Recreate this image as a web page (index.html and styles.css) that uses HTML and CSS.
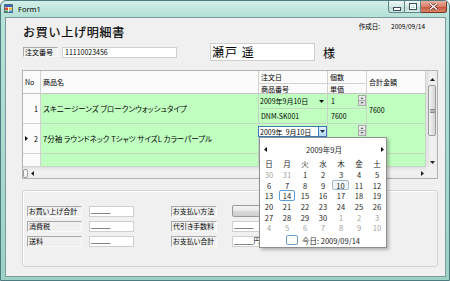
FILE: index.html
```html
<!DOCTYPE html>
<html lang="ja">
<head>
    <meta charset="UTF-8">
    <title>Form1</title>
    <link rel="stylesheet" href="styles.css">
</head>
<body>
    <div class="window">
        <div class="titlebar">
            <div class="caption">
                <svg class="app-icon" viewBox="0 0 9 9">
                    <rect x="0.5" y="0.5" width="8" height="8" fill="#fff" stroke="#56708f"/>
                    <rect x="1" y="1" width="7" height="2" fill="#3a63b8"/>
                    <rect x="1" y="3.5" width="3" height="2.5" fill="#e0452c"/>
                    <rect x="5" y="3.5" width="3" height="2.5" fill="#f2c230"/>
                    <rect x="1" y="6.5" width="3" height="1.5" fill="#3fa344"/>
                    <rect x="5" y="6.5" width="3" height="1.5" fill="#3a8fd8"/>
                </svg>
                <span class="caption-text">Form1</span>
            </div>
            <div class="caption-buttons">
                <span class="cbtn cbtn-min">
                    <svg width="8" height="4" viewBox="0 0 8 4"><rect x="0.5" y="0.5" width="7" height="3" fill="#fff" stroke="#3b4f55"/></svg>
                </span>
                <span class="cbtn cbtn-max">
                    <svg width="8" height="7" viewBox="0 0 8 7"><rect x="0.5" y="0.5" width="7" height="6" fill="none" stroke="#3b4f55"/><rect x="1.5" y="2" width="5" height="3.5" fill="none" stroke="#fff"/></svg>
                </span>
                <span class="cbtn cbtn-close">
                    <svg width="9" height="7" viewBox="0 0 9 7"><path d="M1 0.5 L8 6.5 M8 0.5 L1 6.5" stroke="#5a1b10" stroke-width="2.6"/><path d="M1 0.5 L8 6.5 M8 0.5 L1 6.5" stroke="#fff" stroke-width="1.4"/></svg>
                </span>
            </div>
        </div>

        <div class="client">
            <div class="top-row">
                <h1 class="doc-title">お買い上げ明細書</h1>
                <div class="created"><span>作成日:</span><span>2009/09/14</span></div>
            </div>

            <div class="order-row">
                <span class="label order-label">注文番号</span>
                <span class="textbox order-no">11110023456</span>
                <span class="textbox name-box">瀬戸 遥</span>
                <span class="honorific">様</span>
            </div>

            <div class="grid">
                <div class="cells">
                    <!-- header -->
                    <div class="cell hd span2">No</div>
                    <div class="cell hd span2">商品名</div>
                    <div class="cell hd">注文日</div>
                    <div class="cell hd">個数</div>
                    <div class="cell hd span2">合計金額</div>
                    <div class="cell hd hd-last">商品番号</div>
                    <div class="cell hd hd-last">単価</div>

                    <!-- row 1 -->
                    <div class="cell rh span2"><span></span><span>1</span></div>
                    <div class="cell gr span2 name-cell">スキニージーンズ ブロークンウォッシュタイプ</div>
                    <div class="cell gr date-cell">
                        <span>2009年9月10日</span>
                        <svg width="5" height="3" viewBox="0 0 5 3"><path d="M0 0 H5 L2.5 3 Z" fill="#111"/></svg>
                    </div>
                    <div class="cell gr qty-cell">
                        <span>1</span>
                        <svg class="spin" viewBox="0 0 8 11"><rect x="0.5" y="0.5" width="7" height="5" fill="#ececec" stroke="#a9a9a9"/><rect x="0.5" y="5.5" width="7" height="5" fill="#e2e2e2" stroke="#a9a9a9"/><path d="M2.5 4 H5.5 L4 2.3 Z M2.5 7 H5.5 L4 8.7 Z" fill="#555"/></svg>
                    </div>
                    <div class="cell gr span2 total-cell">7600</div>
                    <div class="cell gr sub">DNM-SK001</div>
                    <div class="cell gr sub qty-cell">7600</div>

                    <!-- row 2 -->
                    <div class="cell rh span2">
                        <svg width="3" height="5" viewBox="0 0 3 5"><path d="M0 0 L3 2.5 L0 5 Z" fill="#111"/></svg>
                        <span>2</span>
                    </div>
                    <div class="cell gr span2 name-cell">7分袖 ラウンドネック Tシャツ サイズL カラーパープル</div>
                    <div class="cell gr date-edit-cell">
                        <div class="date-edit">
                            <span>2009年&nbsp;&nbsp;9月10日</span>
                            <span class="drop-btn"><svg width="5" height="3" viewBox="0 0 5 3"><path d="M0 0 H5 L2.5 3 Z" fill="#1c2f45"/></svg></span>
                        </div>
                    </div>
                    <div class="cell gr qty-cell">
                        <span></span>
                        <svg class="spin" viewBox="0 0 8 11"><rect x="0.5" y="0.5" width="7" height="5" fill="#ececec" stroke="#a9a9a9"/><rect x="0.5" y="5.5" width="7" height="5" fill="#e2e2e2" stroke="#a9a9a9"/><path d="M2.5 4 H5.5 L4 2.3 Z M2.5 7 H5.5 L4 8.7 Z" fill="#555"/></svg>
                    </div>
                    <div class="cell gr span2"></div>
                    <div class="cell gr sub"></div>
                    <div class="cell gr sub"></div>

                    <!-- new row -->
                    <div class="cell rh"></div>
                    <div class="cell gr"></div>
                    <div class="cell gr"></div>
                    <div class="cell gr"></div>
                    <div class="cell gr"></div>
                </div>

                <div class="vscroll">
                    <span class="sb-btn sb-up"><svg width="5" height="3" viewBox="0 0 5 3"><path d="M0 3 H5 L2.5 0 Z" fill="#222"/></svg></span>
                    <span class="vthumb"><svg width="5" height="4" viewBox="0 0 5 4"><path d="M0 0.5 H5 M0 2 H5 M0 3.5 H5" stroke="#777" stroke-width="0.8"/></svg></span>
                    <span class="sb-fill"></span>
                    <span class="sb-btn sb-down"><svg width="5" height="3" viewBox="0 0 5 3"><path d="M0 0 H5 L2.5 3 Z" fill="#222"/></svg></span>
                </div>
                <div class="hscroll">
                    <span class="hthumb"></span>
                    <svg class="h-left" width="3" height="5" viewBox="0 0 3 5"><path d="M3 0 L0 2.5 L3 5 Z" fill="#222"/></svg>
                    <span class="sb-fill"></span>
                    <svg class="h-right" width="3" height="5" viewBox="0 0 3 5"><path d="M0 0 L3 2.5 L0 5 Z" fill="#222"/></svg>
                </div>
                <div class="corner"></div>
            </div>

            <div class="summary">
                <span class="label sum-label">お買い上げ合計</span>
                <span class="textbox sum-box">_____</span>
                <span class="label sum-label right">お支払い方法</span>
                <span class="combo"></span>

                <span class="label sum-label">消費税</span>
                <span class="textbox sum-box">_____</span>
                <span class="label sum-label right">代引き手数料</span>
                <span class="textbox sum-box">_____</span>

                <span class="label sum-label">送料</span>
                <span class="textbox sum-box">_____</span>
                <span class="label sum-label right">お支払い合計</span>
                <span class="textbox sum-box">_____<span class="yen">円</span></span>
            </div>

            <div class="calendar">
                <div class="cal-head">
                    <svg width="3" height="5" viewBox="0 0 3 5"><path d="M3 0 L0 2.5 L3 5 Z" fill="#111"/></svg>
                    <span>2009年9月</span>
                    <svg width="3" height="5" viewBox="0 0 3 5"><path d="M0 0 L3 2.5 L0 5 Z" fill="#111"/></svg>
                </div>
                <div class="cal-grid">
                    <span class="dow">日</span><span class="dow">月</span><span class="dow">火</span><span class="dow">水</span><span class="dow">木</span><span class="dow">金</span><span class="dow">土</span>
                    <span class="day other">30</span><span class="day other">31</span><span class="day">1</span><span class="day">2</span><span class="day">3</span><span class="day">4</span><span class="day">5</span>
                    <span class="day">6</span><span class="day">7</span><span class="day">8</span><span class="day">9</span><span class="day selected">10</span><span class="day">11</span><span class="day">12</span>
                    <span class="day">13</span><span class="day today">14</span><span class="day">15</span><span class="day">16</span><span class="day">17</span><span class="day">18</span><span class="day">19</span>
                    <span class="day">20</span><span class="day">21</span><span class="day">22</span><span class="day">23</span><span class="day">24</span><span class="day">25</span><span class="day">26</span>
                    <span class="day">27</span><span class="day">28</span><span class="day">29</span><span class="day">30</span><span class="day other">1</span><span class="day other">2</span><span class="day other">3</span>
                    <span class="day other">4</span><span class="day other">5</span><span class="day other">6</span><span class="day other">7</span><span class="day other">8</span><span class="day other">9</span><span class="day other">10</span>
                </div>
                <div class="cal-today">
                    <span class="today-box"></span>
                    <span>今日: 2009/09/14</span>
                </div>
            </div>
        </div>
    </div>
</body>
</html>
```

FILE: styles.css
```css
/* Form1 - order detail window */
body {
    margin: 0;
    font-family: "Noto Sans CJK JP", sans-serif;
    color: #000;
}
.window {
    width: 450px;
    height: 281px;
    box-sizing: border-box;
    border: 1px solid #4d7c80;
    border-radius: 6px 6px 0 0;
    background: linear-gradient(180deg, #d2eee8 0, #b7e2d8 14px, #a9d9ce 60%, #9dd1c6 100%);
    display: flex;
    flex-direction: column;
    overflow: hidden;
}
.titlebar {
    height: 16px;
    flex: none;
    display: flex;
    justify-content: space-between;
    align-items: flex-start;
    padding-left: 3px;
}
.caption {
    display: flex;
    align-items: center;
    gap: 5px;
    height: 15px;
}
.app-icon {
    width: 9px;
    height: 9px;
}
.caption-text {
    font-family: "Noto Sans", sans-serif;
    font-size: 7.5px;
}
.caption-buttons {
    display: flex;
    margin-right: 2px;
}
.cbtn {
    height: 12px;
    box-sizing: border-box;
    display: flex;
    align-items: center;
    justify-content: center;
    border: 1px solid #62878b;
    border-top: none;
    background: linear-gradient(#eef8f6, #d3e9e5 50%, #bcdad5 51%, #d2e8e4);
}
.cbtn-min {
    width: 17px;
    border-radius: 0 0 0 3px;
    padding-top: 4px;
}
.cbtn-max {
    width: 16px;
    border-left: none;
}
.cbtn-close {
    width: 26px;
    border-left: none;
    border-radius: 0 0 3px 0;
    border-color: #7a3426;
    background: linear-gradient(#eab2a2, #d8806a 50%, #c4533b 51%, #d9856a);
}

/* client area */
.client {
    flex: 1;
    margin: 0 3px 3px 4px;
    border: 1px solid #7b9c9f;
    background: #f0f0f0;
    position: relative;
    padding: 4px 0 0 16px;
}
.top-row {
    display: flex;
    justify-content: space-between;
    align-items: flex-start;
    padding-right: 20px;
}
.doc-title {
    margin: 3px 0 0 1px;
    font-size: 12px;
    line-height: 14px;
    font-weight: normal;
    letter-spacing: 0.75px;
    -webkit-text-stroke: 0.2px #000;
}
.created {
    display: flex;
    gap: 11px;
    font-size: 6.5px;
    line-height: 8px;
}
.order-row {
    margin-top: 4px;
    height: 18px;
    display: flex;
    align-items: center;
}
.label {
    box-sizing: border-box;
    border: 1px solid;
    border-color: #a9a9a9 #fafafa #fafafa #a9a9a9;
    font-size: 7px;
    line-height: 8px;
    padding-left: 1px;
    font-feature-settings: "palt";
    white-space: nowrap;
}
.order-label {
    width: 35px;
    height: 10px;
    margin-left: 1px;
}
.textbox {
    box-sizing: border-box;
    background: #fff;
    border: 1px solid #cfcfcf;
    white-space: nowrap;
}
.order-no {
    width: 115px;
    height: 11px;
    margin-left: 4px;
    font-size: 7px;
    line-height: 9px;
    padding-left: 2px;
}
.name-box {
    width: 105px;
    height: 18px;
    margin-left: 33px;
    font-size: 12px;
    line-height: 16px;
    padding-left: 1px;
    letter-spacing: 1px;
}
.honorific {
    margin-left: 8px;
    font-size: 12px;
}

/* data grid */
.grid {
    margin-top: 9px;
    width: 416px;
    height: 109px;
    box-sizing: border-box;
    border: 1px solid #b2b2b2;
    display: grid;
    grid-template-columns: 403px 11px;
    grid-template-rows: 96px 11px;
    background: #fff;
}
.cells {
    display: grid;
    grid-template-columns: 18px 218px 69px 39px 59px;
    grid-template-rows: 13px 10px 15px 15px 15px 15px 13px;
    font-size: 7px;
    font-feature-settings: "palt";
    overflow: hidden;
}
.cell {
    box-sizing: border-box;
    border-right: 1px solid #d2d2d2;
    border-bottom: 1px solid #d2d2d2;
    display: flex;
    align-items: center;
    padding-left: 2px;
    white-space: nowrap;
    overflow: hidden;
}
.span2 {
    grid-row: span 2;
}
.hd {
    background: #fbfbfb;
}
.hd-last, .hd.span2 {
    border-bottom-color: #c4c4c4;
}
.rh {
    background: #fbfbfb;
    justify-content: space-between;
    padding-right: 2px;
}
.gr {
    background: #c0ffc0;
    border-color: #c6d6c6;
}
.name-cell {
    font-size: 7.5px;
}
.date-cell {
    padding-left: 1px;
    padding-right: 3px;
    justify-content: space-between;
}
.qty-cell {
    padding-left: 3px;
    padding-right: 0;
    justify-content: space-between;
}
.spin {
    width: 8px;
    height: 11px;
    align-self: flex-start;
    margin-top: 1px;
}
.sub.qty-cell {
    justify-content: flex-start;
}
.total-cell {
    padding-top: 2px;
}
.date-edit-cell {
    padding-left: 0;
    align-items: flex-start;
    overflow: visible;
}
.date-edit {
    margin: 2px 0 0 -1px;
    width: 69px;
    height: 11px;
    box-sizing: border-box;
    border: 1px solid #3b79b7;
    background: #fff;
    display: flex;
    justify-content: space-between;
    align-items: center;
    padding-left: 1px;
}
.drop-btn {
    width: 8px;
    height: 9px;
    box-sizing: border-box;
    border-left: 1px solid #3b79b7;
    background: linear-gradient(#e4f1fc, #b6dbf6);
    display: flex;
    align-items: center;
    justify-content: center;
}

/* scrollbars */
.vscroll {
    display: flex;
    flex-direction: column;
    align-items: center;
    background: linear-gradient(90deg, #e2e2e2, #f2f2f2 40%, #ebebeb);
    border-left: 1px solid #e4e4e4;
}
.sb-btn {
    display: flex;
    justify-content: center;
}
.sb-up {
    height: 14px;
    align-items: center;
    padding-top: 2px;
    box-sizing: border-box;
}
.sb-down {
    height: 10px;
    align-items: center;
}
.vthumb {
    width: 8px;
    height: 51px;
    box-sizing: border-box;
    border: 1px solid #9c9c9c;
    border-radius: 2px;
    background: linear-gradient(90deg, #f6f6f6, #e4e4e4 50%, #d6d6d6);
    display: flex;
    align-items: center;
    justify-content: center;
}
.sb-fill {
    flex: 1;
}
.hscroll {
    display: flex;
    align-items: center;
    background: linear-gradient(#e6e6e6, #f2f2f2 40%, #ececec);
    border-top: 1px solid #e2e2e2;
}
.hthumb {
    width: 5px;
    height: 9px;
    box-sizing: border-box;
    border: 1px solid #9c9c9c;
    border-radius: 2px;
    background: #f7f7f7;
}
.h-left {
    margin-left: 3px;
}
.h-right {
    margin-right: 2px;
}
.corner {
    background: #f0f0f0;
}

/* totals panel */
.summary {
    margin-top: 11px;
    width: 416px;
    height: 77px;
    box-sizing: border-box;
    border: 1px solid #d3d3d3;
    border-radius: 3px;
    box-shadow: inset 1px 1px 0 #fff;
    padding: 15px 0 0 4px;
    display: grid;
    grid-template-columns: 62px 82px 61px 60px;
    grid-template-rows: repeat(3, 11px);
    row-gap: 4px;
    align-items: start;
}
.sum-label {
    width: 55px;
    height: 11px;
    line-height: 9px;
}
.sum-label.right {
    width: 46px;
}
.sum-box {
    width: 45px;
    height: 11px;
    font-family: "Liberation Sans", sans-serif;
    font-size: 7px;
    line-height: 6px;
    padding-left: 1px;
}
.yen {
    font-family: "Noto Sans CJK JP", sans-serif;
}
.combo {
    width: 60px;
    height: 12px;
    margin-top: -1px;
    box-sizing: border-box;
    border: 1px solid #9a9a9a;
    border-radius: 2px;
    background: linear-gradient(#f4f4f4, #e8e8e8 50%, #d9d9d9 51%, #d0d0d0);
}

/* dropdown calendar */
.calendar {
    position: absolute;
    left: 253px;
    top: 119px;
    width: 128px;
    height: 111px;
    box-sizing: border-box;
    border: 1px solid #8d8f90;
    background: #fff;
    box-shadow: 2px 2px 3px rgba(0, 0, 0, 0.25);
    padding-top: 4px;
    font-size: 7.5px;
    color: #1e1e1e;
}
.cal-head {
    height: 14px;
    margin-bottom: 2px;
    display: flex;
    align-items: center;
    justify-content: space-between;
    padding: 0 2px 0 4px;
}
.cal-grid {
    display: grid;
    grid-template-columns: repeat(7, 18px);
    grid-template-rows: 11px repeat(6, 10.7px);
}
.cal-grid span {
    display: flex;
    align-items: center;
    justify-content: center;
    box-sizing: border-box;
}
.day.other {
    color: #a2a2a2;
}
.day.selected {
    border: 1px solid #9fb6cd;
    border-radius: 2px;
    background: #f1f6fb;
    margin: 0 1px 0 0;
}
.day.today {
    border: 1px solid #5e9fd6;
    border-radius: 2px;
    margin: 0 1px;
}
.cal-today {
    margin-top: 1px;
    height: 12px;
    display: flex;
    align-items: center;
    justify-content: center;
    gap: 4px;
}
.today-box {
    width: 10px;
    height: 8px;
    border: 1px solid #6f9dcb;
    border-radius: 2px;
}
```
